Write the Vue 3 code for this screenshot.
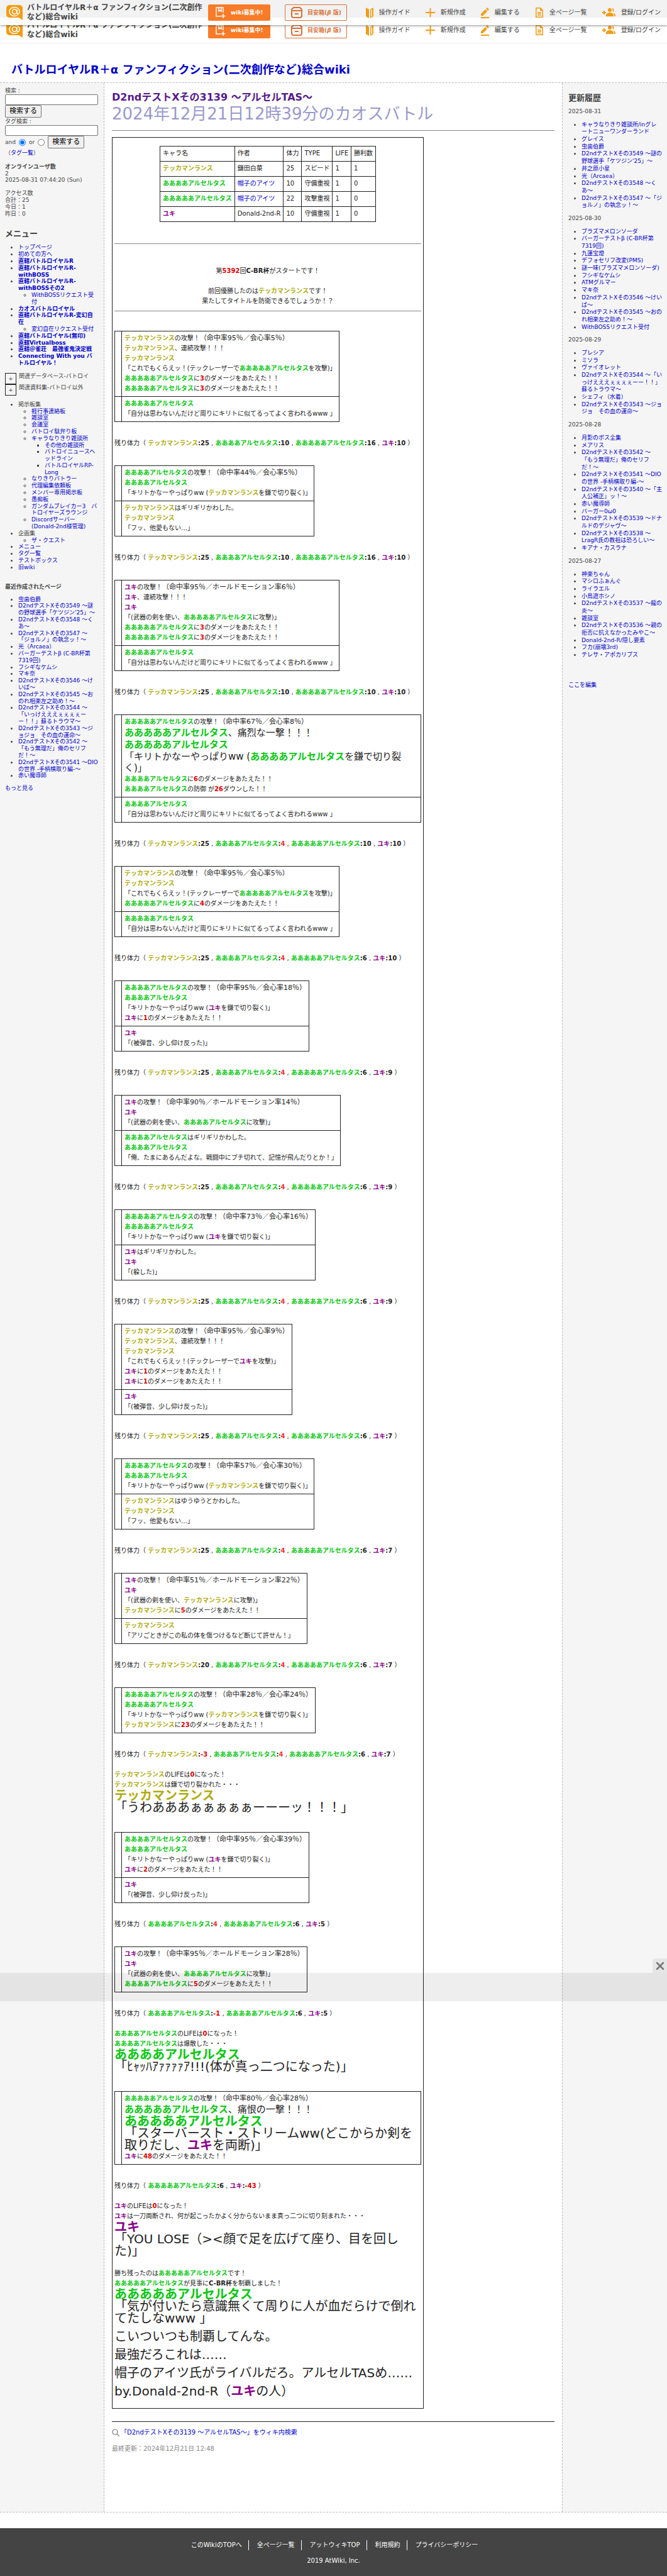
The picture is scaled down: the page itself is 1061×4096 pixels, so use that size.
<script setup>
const names = {
  t: 'テッカマンランス',
  a: 'ああああアルセルタス',
  b: 'あああああアルセルタス',
  y: 'ユキ',
}

// {t} {a} {b} {y}: fighter names, {r:..} damage, {l:..} low hp, {n:..} hp, {s:..} hit rates
function parse(line) {
  return line
    .split(/(\{[^}]+\})/)
    .filter((part) => part !== '')
    .map((part) => {
      const m = part.match(/^\{(\w)(?::(.*))?\}$/)
      if (!m) return { cls: '', text: part }
      return { cls: 'c-' + m[1], text: m[2] ?? names[m[1]] }
    })
}

// a leading "2|" or "3|" marks an enlarged line
function toLine(raw) {
  const m = raw.match(/^([23])\|(.*)$/)
  return m ? { size: 'size' + m[1], parts: parse(m[2]) } : { size: 'size1', parts: parse(raw) }
}

const hit = (who, rate, kind, crit) => `{${who}}の攻撃！{s:（命中率${rate}％／${kind}${crit}％）}`
const dmg = (who, n) => `{${who}}に{r:${n}}のダメージをあたえた！！`
const crit = '会心率'
const hold = 'ホールドモーション率'
const kirito = '「自分は思わないんだけど周りにキリトに似てるってよく言われるwww 」'
const sickle = (who) => `「キリトかなーやっぱりww ({${who}}を鎌で切り裂く)」`
const laser = (who) => `「これでもくらえッ！(テックレーザーで{${who}}を攻撃)」`
const sword = (who) => `「(武器の剣を使い、{${who}}に攻撃)」`
const flinch = '「(被弾音、少し仰け反った)」'

function status(hp) {
  const list = Object.entries(hp).map(([who, n]) => {
    if (n < 0) return `{${who}}{n::}{r:${n}}`
    if (who === 'a' && n < 5) return `{${who}}{n::}{l:${n}}`
    return `{${who}}{n::${n}}`
  })
  return parse(`残り体力（ ${list.join(' , ')} ）`)
}

const turns = [
  { rows: [[hit('t', 95, crit, 5), '{t}、連続攻撃！！！', '{t}', laser('b'), dmg('b', 3), dmg('b', 3)], ['{b}', kirito]], hp: { t: 25, a: 10, b: 16, y: 10 } },
  { rows: [[hit('a', 44, crit, 5), '{a}', sickle('t')], ['{t}はギリギリかわした。', '{t}', '「フッ、他愛もない…」']], hp: { t: 25, a: 10, b: 16, y: 10 } },
  { rows: [[hit('y', 95, hold, 6), '{y}、連続攻撃！！！', '{y}', sword('b'), dmg('b', 3), dmg('b', 3)], ['{b}', kirito]], hp: { t: 25, a: 10, b: 10, y: 10 } },
  { rows: [[hit('b', 67, crit, 8), '2|{b}、痛烈な一撃！！！', '2|{b}', '2|' + sickle('a'), dmg('a', 6), '{a}の防御 が{r:26}ダウンした！！'], ['{a}', kirito]], hp: { t: 25, a: 4, b: 10, y: 10 } },
  { rows: [[hit('t', 95, crit, 5), '{t}', laser('b'), dmg('b', 4)], ['{b}', kirito]], hp: { t: 25, a: 4, b: 6, y: 10 } },
  { rows: [[hit('a', 95, crit, 18), '{a}', sickle('y'), dmg('y', 1)], ['{y}', flinch]], hp: { t: 25, a: 4, b: 6, y: 9 } },
  { rows: [[hit('y', 90, hold, 14), '{y}', sword('a')], ['{a}はギリギリかわした。', '{a}', '「俺、たまにあるんだよな。戦闘中にブチ切れて、記憶が飛んだりとか！」']], hp: { t: 25, a: 4, b: 6, y: 9 } },
  { rows: [[hit('b', 73, crit, 16), '{b}', sickle('y')], ['{y}はギリギリかわした。', '{y}', '「(躱した)」']], hp: { t: 25, a: 4, b: 6, y: 9 } },
  { rows: [[hit('t', 95, crit, 9), '{t}、連続攻撃！！！', '{t}', laser('y'), dmg('y', 1), dmg('y', 1)], ['{y}', flinch]], hp: { t: 25, a: 4, b: 6, y: 7 } },
  { rows: [[hit('a', 57, crit, 30), '{a}', sickle('t')], ['{t}はゆうゆうとかわした。', '{t}', '「フッ、他愛もない…」']], hp: { t: 25, a: 4, b: 6, y: 7 } },
  { rows: [[hit('y', 51, hold, 22), '{y}', sword('t'), dmg('t', 5)], ['{t}', '「アリごときがこの私の体を傷つけるなど断じて許せん！」']], hp: { t: 20, a: 4, b: 6, y: 7 } },
  { rows: [[hit('b', 28, crit, 24), '{b}', sickle('t'), dmg('t', 23)]], hp: { t: -3, a: 4, b: 6, y: 7 }, fall: ['{t}のLIFEは{r:0}になった！', '{t}は鎌で切り裂かれた・・・', '3|{t}', '3|「うわあああぁぁぁぁぁーーーッ！！！」'] },
  { rows: [[hit('a', 95, crit, 39), '{a}', sickle('y'), dmg('y', 2)], ['{y}', flinch]], hp: { a: 4, b: 6, y: 5 } },
  { rows: [[hit('y', 95, hold, 28), '{y}', sword('a'), dmg('a', 5)]], hp: { a: -1, b: 6, y: 5 }, fall: ['{a}のLIFEは{r:0}になった！', '{a}は爆散した・・・', '3|{a}', '3|「ﾋｬｯﾊｱｧｧｧｧｱ!!!(体が真っ二つになった)」'] },
  { rows: [[hit('b', 80, crit, 28), '2|{b}、痛恨の一撃！！！', '3|{b}', '3|「スターバースト・ストリームww(どこからか剣を取りだし、{y}を両断)」', dmg('y', 48)]], hp: { b: 6, y: -43 }, fall: ['{y}のLIFEは{r:0}になった！', '{y}は一刀両断され、何が起こったかよく分からないまま真っ二つに切り刻まれた・・・', '3|{y}', '3|「YOU LOSE（><顔で足を広げて座り、目を回した)」'] },
].map((turn) => ({
  rows: turn.rows.map((row) => row.map(toLine)),
  status: status(turn.hp),
  fall: (turn.fall ?? []).map(toLine),
}))

const ending = ['勝ち残ったのは{b}です！', '{b}が見事に{n:C-BR杯}を制覇しました！', '3|{b}', '3|「気が付いたら意識無くて周りに人が血だらけで倒れてたしなwww 」'].map(toLine)
const comments = ['こいついつも制覇してんな。', '最強だろこれは……', '帽子のアイツ氏がライバルだろ。アルセルTASめ……', 'by.Donald-2nd-R（{y}の人）'].map(parse)

const fighters = [
  { id: 't', author: '鎌田白菜', hp: 25, type: 'スピード', wins: 1 },
  { id: 'a', author: '帽子のアイツ', link: true, hp: 10, type: '守備重視', wins: 0 },
  { id: 'b', author: '帽子のアイツ', link: true, hp: 22, type: '攻撃重視', wins: 0 },
  { id: 'y', author: 'Donald-2nd-R', hp: 10, type: '守備重視', wins: 0 },
]

const menu = [
  { text: 'トップページ' },
  { text: '初めての方へ' },
  { text: '直轄バトルロイヤルR', bold: true },
  { text: '直轄バトルロイヤルR-withBOSS', bold: true },
  { text: '直轄バトルロイヤルR-withBOSSその2', bold: true, sub: ['WithBOSSリクエスト受付'] },
  { text: 'カオスバトルロイヤル', bold: true },
  { text: '直轄バトルロイヤルR-変幻自在', bold: true, sub: ['変幻自在リクエスト受付'] },
  { text: '直轄バトルロイヤル(無印)', bold: true },
  { text: '直轄Virtualboss', bold: true },
  { text: '直轄＠雀荘　最強雀鬼決定戦', bold: true },
  { text: 'Connecting With you バトルロイヤル！', bold: true },
]
const boards = [
  { text: '軽行事連絡板' },
  { text: '雑談室' },
  { text: '会議室' },
  { text: 'バトロイ駄弁り板' },
  { text: 'キャラなりきり雑談所', sub: ['その他の雑談所', 'バトロイニュースヘッドライン', 'バトルロイヤルRP-Long'] },
  { text: 'なりきりバトラー' },
  { text: '代理編集依頼板' },
  { text: 'メンバー専用掲示板' },
  { text: '愚痴板' },
  { text: 'ガンダムブレイカー3　バトロイヤーズラウンジ' },
  { text: 'Discordサーバー(Donald-2nd様管理)' },
]
const x = 'D2ndテストXその'
const recent = ['虫歯伯爵', x + "3549 〜謎の野球選手「ケツジン'25」〜", x + '3548 〜くあ〜', x + '3547 〜「ジョルノ」の執念ッ！〜', '光（Arcaea）', 'バーガーテストβ (C-BR杯第7319回)', 'フシギなケムシ', 'マキ奈', x + '3546 〜けいば〜', x + '3545 〜おのれ相楽左之助め！〜', x + '3544 〜「いっけえええぇぇぇぇーー！！」蘇るトラウマ〜', x + '3543 〜ジョジョ　その血の運命〜', x + '3542 〜「もう無理だ」俺のセリフだ！〜', x + '3541 〜DIOの世界 -手柄横取り編-〜', '赤い魔導師']
const history = [
  { date: '2025-08-31', items: ['キャラなりきり雑談所/inグレートニューワンダーランド', 'グレイス', '虫歯伯爵', x + "3549 〜謎の野球選手「ケツジン'25」〜", '井之原小星', '光（Arcaea）', x + '3548 〜くあ〜', x + '3547 〜「ジョルノ」の執念ッ！〜'] },
  { date: '2025-08-30', items: ['プラズマメロンソーダ', 'バーガーテストβ (C-BR杯第7319回)', '九蓮宝燈', 'デフォセリフ改変(PMS)', '謎一味(プラズマメロンソーダ)', 'フシギなケムシ', 'ATMグルマー', 'マキ奈', x + '3546 〜けいば〜', x + '3545 〜おのれ相楽左之助め！〜', 'WithBOSSリクエスト受付'] },
  { date: '2025-08-29', items: ['プレシア', 'ミソラ', 'ヴァイオレット', x + '3544 〜「いっけえええぇぇぇぇーー！！」蘇るトラウマ〜', 'シェフィ（水着）', x + '3543 〜ジョジョ　その血の運命〜'] },
  { date: '2025-08-28', items: ['月影のボス全集', 'メアリス', x + '3542 〜「もう無理だ」俺のセリフだ！〜', x + '3541 〜DIOの世界 -手柄横取り編-〜', x + '3540 〜「主人公補正」ッ！〜', '赤い魔導師', 'バーガー0ω0', x + '3539 〜ドナルドのデジャヴ〜', x + '3538 〜LragR氏の教祖は恐ろしい〜', 'キアナ・カスラナ'] },
  { date: '2025-08-27', items: ['神楽ちゃん', 'マシロふぁんぐ', 'ライラエル', '小鳥遊ホシノ', x + '3537 〜龍の炎〜', '雑談室', x + '3536 〜親の拒否に抗えなかったみやこ〜', 'Donald-2nd-R/隠し要素', 'フカ(崩壊3rd)', 'テレサ・アポカリプス'] },
]

const nav = [
  { text: '操作ガイド', w: 12, box: '0 0 12 18', d: 'M0 1l5 3v14l-5-3zM12 1v14l-5 3V4zM10 4L8.500 5v10.500L10 14.500z' },
  { text: '新規作成', w: 15, box: '0 0 15 18', d: 'M6.500 2h2v6H15v2H8.500v6h-2v-6H0V8h6.500z' },
  { text: '編集する', w: 13, box: '0 0 13 18', d: 'M0 16h13v2H0zM0 14v-3l7-7 3 3-7 7zM8 3l2-2 3 3-2 2z' },
  { text: '全ページ一覧', w: 14, box: '0 0 14 18', d: 'M1 1h8l4 4v12H1zM2.500 2.500v13h9V6H8V2.500zM4 8h6v1.500H4zM4 10.500h6V12H4zM4 13h6v1H4z' },
  { text: '登録/ログイン', w: 21, box: '0 0 21 18', d: 'M9 5a3 3 0 1 1 6 0 3 3 0 0 1-6 0zM15 2a3 3 0 0 1 1 6 5 5 0 0 0-1-6zM6 15v-2c0-2 3-4 6-4s6 2 6 4v2zM17 9.500c2 .5 4 1.500 4 3.500v2h-2v-2c0-1.500-1-2.500-2-3.500zM2 6h2v2h2v2H4v2H2v-2H0V8h2z' },
]
const footerLinks = ['このWikiのTOPへ', '全ページ一覧', 'アットウィキTOP', '利用規約', 'プライバシーポリシー']
const siteName = 'バトルロイヤルR＋α ファンフィクション(二次創作など)総合wiki'
</script>

<template>
  <div class="page">
    <header v-for="bar in ['floating', 'static']" :key="bar" class="bar" :class="bar">
      <a href="#" class="brand">
        <svg class="logo" viewBox="0 0 26 24" width="26" height="24">
          <path d="M5 0h16a5 5 0 0 1 5 5v19l-6-4H5a5 5 0 0 1-5-5V5a5 5 0 0 1 5-5z" fill="#f39c12" />
          <path d="M17 7v5.500c0 3 4 2.500 4-2 0-4-3.500-7-8-7s-8 3-8 7 3.500 7 8 7c2 0 3.500-.5 5-1.500" fill="none" stroke="#fff" stroke-width="1.500" />
          <ellipse cx="13" cy="10.500" rx="3.500" ry="3.700" fill="none" stroke="#fff" stroke-width="1.500" />
        </svg>
        <span class="brand-name">{{ siteName }}</span>
      </a>
      <a href="#" class="pill solid">
        <svg viewBox="0 0 16 20" width="16" height="20" fill="none" stroke="#fff" stroke-width="1.500">
          <path d="M8 16H1V2h11v8M5 2v6l2-1.500L9 8V2M12 12v7M8.500 15.500h7" />
        </svg>
        wiki募集中!
      </a>
      <a href="#" class="pill outline">
        <svg viewBox="0 0 18 18" width="18" height="18" fill="none" stroke="#d9713a" stroke-width="2">
          <path d="M4 1h10l3 3v10a3 3 0 0 1-3 3H4a3 3 0 0 1-3-3V4zM1 6h16M6 11h6" />
        </svg>
        <span>目安箱(<i>β</i> 版)</span>
      </a>
      <nav class="nav">
        <a v-for="n in nav" :key="n.text" href="#">
          <svg :viewBox="n.box" :width="n.w" height="18"><path :d="n.d" fill="#f39c12" fill-rule="evenodd" /></svg>
          {{ n.text }}
        </a>
      </nav>
    </header>

    <h1 class="site-title"><a href="#">{{ siteName }}</a></h1>

    <div class="columns">
      <aside class="side left">
        <form @submit.prevent>
          <label for="q">検索 :</label>
          <input id="q" type="text" class="field">
          <button type="submit">検索する</button>
          <label for="tag" class="tag-label">タグ検索 :</label>
          <input id="tag" type="text" class="field">
          <div class="mode">
            <label for="m-and">and</label><input id="m-and" type="radio" name="mode" checked>
            <label for="m-or">or</label><input id="m-or" type="radio" name="mode">
            <button type="submit">検索する</button>
          </div>
          <p class="tags">（<a href="#">タグ一覧</a>）</p>
        </form>
        <p class="online"><b>オンラインユーザ数</b><br>2<br>2025-08-31 07:44:20 (Sun)</p>
        <p class="access">アクセス数<br>合計：25<br>今日：1<br>昨日：0</p>
        <h2>メニュー</h2>
        <ul>
          <li v-for="m in menu" :key="m.text">
            <a href="#" :class="{ strong: m.bold }">{{ m.text }}</a>
            <ul v-if="m.sub"><li v-for="s in m.sub" :key="s"><a href="#">{{ s }}</a></li></ul>
          </li>
        </ul>
        <div class="folds">
          <div class="fold"><button type="button">+</button>関連データベース-バトロイ</div>
          <div class="fold"><button type="button">+</button>関連資料集-バトロイ以外</div>
        </div>
        <ul>
          <li>掲示板集
            <ul>
              <li v-for="b in boards" :key="b.text">
                <a href="#">{{ b.text }}</a>
                <ul v-if="b.sub"><li v-for="s in b.sub" :key="s"><a href="#">{{ s }}</a></li></ul>
              </li>
            </ul>
          </li>
          <li>企画集<ul><li><a href="#">ザ・クエスト</a></li></ul></li>
          <li><a href="#">メニュー</a></li>
          <li><a href="#">タグ一覧</a></li>
          <li><a href="#">テストボックス</a></li>
          <li><a href="#">旧wiki</a></li>
        </ul>
        <h3>最近作成されたページ</h3>
        <ul><li v-for="r in recent" :key="r"><a href="#">{{ r }}</a></li></ul>
        <p class="more"><a href="#">もっと見る</a></p>
      </aside>

      <main class="main">
        <h2 class="title"><a href="#">D2ndテストXその3139 〜アルセルTAS〜</a></h2>
        <p class="subtitle">2024年12月21日12時39分のカオスバトル</p>
        <hr class="top-rule">
        <section class="box">
          <table class="grid fighters">
            <thead>
              <tr><th>キャラ名</th><th>作者</th><th>体力</th><th>TYPE</th><th>LIFE</th><th>勝利数</th></tr>
            </thead>
            <tbody>
              <tr v-for="f in fighters" :key="f.id">
                <td><span :class="'c-' + f.id">{{ names[f.id] }}</span></td>
                <td><a v-if="f.link" href="#">{{ f.author }}</a><template v-else>{{ f.author }}</template></td>
                <td>{{ f.hp }}</td><td>{{ f.type }}</td><td>1</td><td>{{ f.wins }}</td>
              </tr>
            </tbody>
          </table>
          <hr class="rule-a">
          <p class="center opening">第<span class="c-r">5392</span>回<b>C-BR杯</b>がスタートです！</p>
          <p class="center">前回優勝したのは<span class="c-t">テッカマンランス</span>です！<br>果たしてタイトルを防衛できるでしょうか！？</p>
          <hr class="rule-b">

          <template v-for="(turn, i) in turns" :key="i">
            <table class="grid">
              <tbody>
                <tr v-for="(row, r) in turn.rows" :key="r">
                  <td class="slot"></td>
                  <td>
                    <div v-for="(line, l) in row" :key="l" :class="line.size"><span v-for="(s, k) in line.parts" :key="k" :class="s.cls">{{ s.text }}</span></div>
                  </td>
                </tr>
              </tbody>
            </table>
            <p class="status"><span v-for="(s, k) in turn.status" :key="k" :class="s.cls">{{ s.text }}</span></p>
            <div v-if="turn.fall.length" class="fall">
              <div v-for="(line, l) in turn.fall" :key="l" :class="line.size"><span v-for="(s, k) in line.parts" :key="k" :class="s.cls">{{ s.text }}</span></div>
            </div>
          </template>

          <div class="ending">
            <div v-for="(line, l) in ending" :key="l" :class="line.size"><span v-for="(s, k) in line.parts" :key="k" :class="s.cls">{{ s.text }}</span></div>
          </div>
          <p v-for="(parts, c) in comments" :key="'c' + c" class="comment"><span v-for="(s, k) in parts" :key="k" :class="s.cls">{{ s.text }}</span></p>
        </section>
        <hr class="end-rule">
        <p class="find">
          <svg viewBox="0 0 12 12" width="12" height="12" fill="none" stroke="#777" stroke-width="1.200"><circle cx="5" cy="5" r="4" /><path d="M8 8l4 4" /></svg>
          <a href="#">「D2ndテストXその3139 〜アルセルTAS〜」をウィキ内検索</a>
        </p>
        <p class="updated">最終更新：2024年12月21日 12:48</p>
      </main>

      <aside class="side right">
        <h2>更新履歴</h2>
        <template v-for="h in history" :key="h.date">
          <p class="date">{{ h.date }}</p>
          <ul><li v-for="t in h.items" :key="t"><a href="#">{{ t }}</a></li></ul>
        </template>
        <p class="edit"><a href="#">ここを編集</a></p>
      </aside>
    </div>

    <footer class="footer">
      <nav><a v-for="f in footerLinks" :key="f" href="#">{{ f }}</a></nav>
      <p>2019 AtWiki, Inc.</p>
    </footer>

    <div class="ad">
      <button type="button" aria-label="閉じる">
        <svg viewBox="0 0 14 14" width="14" height="14" stroke="#757575" stroke-width="2.500" stroke-linecap="round"><path d="M2 2l10 10M12 2L2 12" /></svg>
      </button>
    </div>
  </div>
</template>

<style>
body { margin: 0; background: #fff; }
</style>

<style scoped>
.page { position: relative; padding-top: 28px; font: 10px/16px "DejaVu Sans", "Noto Sans CJK JP", sans-serif; color: #222; }
p, h1, h2, h3, ul { margin: 0; padding: 0; }
a { color: #0000cc; text-decoration: none; }
hr { height: 1px; border: 0; background: #888; }

.bar { display: flex; align-items: center; height: 40px; padding: 0 10px; box-sizing: border-box; }
.bar.static { height: 41px; border-bottom: 1px solid #e8e8e8; }
.bar.floating { position: absolute; z-index: 2; top: 0; left: 0; right: 0; background: linear-gradient(#f2f2f2 28px, #fdfdfd 28px); box-shadow: 0 1px 3px rgba(0, 0, 0, .45); }
.brand { display: flex; align-items: center; gap: 7px; width: 321px; color: #444; font-size: 12px; font-weight: bold; line-height: 15px; }
.brand-name { width: 284px; }
.logo { flex: none; }
.pill { display: flex; align-items: center; gap: 8px; box-sizing: border-box; width: 99px; height: 26px; padding-left: 11px; border: 1px solid #d9713a; border-radius: 2px; margin-right: 23px; font-size: 9px; font-weight: bold; color: #d9713a; white-space: nowrap; }
.pill.solid { background: #f97b28; border-color: #f97b28; color: #fff; }
.pill.outline { padding-left: 9px; margin-right: 0; }
.nav { display: flex; gap: 24px; margin-left: auto; }
.nav a { display: flex; align-items: center; gap: 9px; color: #444; white-space: nowrap; }

.site-title { padding: 30px 18px 8px; font-size: 18px; line-height: 24px; }

.columns { display: flex; border-top: 1px dashed #bbb; border-bottom: 1px dashed #bbb; }
.side { flex: none; box-sizing: border-box; background: #f5f5f5; color: #444; font-size: 9px; }
.left { width: 166px; padding: 7px 9px 0 8px; border-right: 1px dashed #bbb; line-height: 1.2; }
.right { width: 167px; padding: 16px 8px 0 9px; border-left: 1px dashed #bbb; line-height: 1.3; }
.side ul { padding-left: 21px; }
.side ul > li { list-style: disc; }
.side li li { list-style: circle; }
.side li li li { list-style: square; }
.side h2 { font-size: 13px; line-height: 16px; }
.side h3 { font-size: 9px; line-height: 11px; margin: 20px 0 9px; }
.strong { font-weight: bold; }
.left form { display: flex; flex-direction: column; align-items: flex-start; }
.left form > label { line-height: 11px; }
.left form > .tag-label { margin-top: 1px; }
.field { box-sizing: border-box; width: 148px; height: 17px; padding: 0; border: 1px solid #767676; border-radius: 2px; background: #fff; }
.left form button { height: 20px; padding: 0 6px; border: 1px solid #767676; border-radius: 2px; background: #efefef; color: #000; font: 11px/16px "DejaVu Sans", "Noto Sans CJK JP", sans-serif; }
.mode { display: flex; align-items: center; }
.mode input { width: 11px; height: 11px; margin: 0 5px; }
.tags { margin: 2px 0 0; }
.online { margin-top: 11px; }
.access { margin-top: 10px; }
.left h2 { margin: 19px 0 8px; }
.right h2 { margin-bottom: 8px; }
.folds { margin: 10px 0 9px; }
.fold { display: flex; gap: 4px; }
.fold button { flex: none; box-sizing: border-box; width: 18px; height: 18px; padding: 0; border: 1px solid #222; background: none; color: #444; font: 9px/14px "DejaVu Sans", sans-serif; }
.more { margin-top: 9px; }
.right ul { margin: 9px 0; }
.edit { margin-top: 36px; }

.main { flex: 1; min-width: 0; padding: 13px 12px 92px; }
.title { font-size: 16px; line-height: 20px; }
.title a { color: #551a8b; }
.subtitle { font-size: 26px; line-height: 32px; color: #9999cc; white-space: nowrap; }
.top-rule { margin: 10px 0; }
.box { box-sizing: border-box; width: 496px; padding: 13px 3px 17px; border: 1px solid #222; }
.grid { border-collapse: collapse; }
.grid th, .grid td { padding: 3px 4px 4px; border: 1px solid #222; font-weight: normal; text-align: left; vertical-align: top; }
.grid .slot { width: 2px; }
.fighters { margin: 0 auto; }
.fighters td, .fighters th { white-space: nowrap; }
.rule-a { margin: 34px 0 35px; }
.rule-b { margin: 7px 0 31px; }
.center { text-align: center; }
.opening { margin-bottom: 16px; }
.status { margin: 26px 0 27px; font-size: 11px; white-space: nowrap; }
.status [class] { font-size: 10px; line-height: 1; }
.fall { margin: -11px 0 29px; }
.ending { margin-top: -11px; }
.size2 { font-size: 15px; line-height: 1.25; }
.size3 { font-size: 20px; line-height: 19px; }
.comment { margin-top: 9px; font-size: 20px; line-height: 20px; }
.c-t, .c-a, .c-b, .c-y, .c-r, .c-l, .c-n { font-weight: bold; }
.c-t { color: #b0ac14; }
.c-a, .c-b { color: #0ac814; }
.c-y { color: #880088; }
.c-r { color: #dd0000; }
.c-l { color: #ee3333; }
.c-s { font-size: 11px; line-height: 1; }
.end-rule { margin: 20px 0 9px; background: #222; }
.find { display: flex; align-items: center; gap: 2px; }
.updated { margin-top: 10px; color: #888; }

.footer { margin-top: 25px; padding: 19px 0 17px; background: #444; color: #fff; text-align: center; }
.footer nav { display: flex; justify-content: center; margin-bottom: 9px; }
.footer a { padding: 0 10px 0 13px; color: #fff; line-height: 16px; }
.footer a + a { border-left: 1px solid #fff; }

.ad { position: absolute; top: 3137px; left: 0; right: 0; height: 45px; background: rgba(0, 0, 0, .065); }
.ad button { position: absolute; right: 0; bottom: 100%; display: flex; align-items: center; justify-content: center; width: 23px; height: 23px; padding: 0; border: 0; border-radius: 6px 0 0 0; background: #e6e6e6; }
</style>
